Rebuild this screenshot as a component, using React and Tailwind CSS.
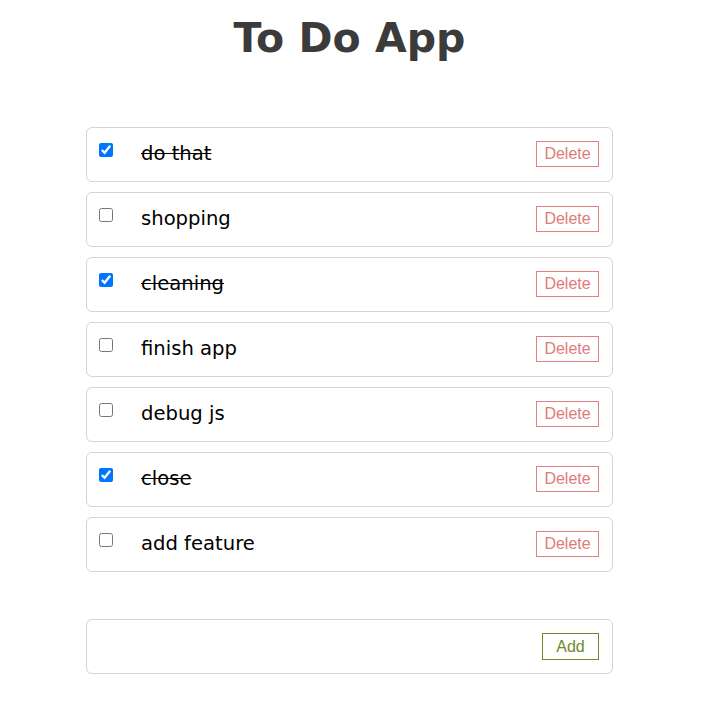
import { useState } from 'react'

const initial = [
  { id: 1, text: 'do that', done: true },
  { id: 2, text: 'shopping', done: false },
  { id: 3, text: 'cleaning', done: true },
  { id: 4, text: 'finish app', done: false },
  { id: 5, text: 'debug js', done: false },
  { id: 6, text: 'close', done: true },
  { id: 7, text: 'add feature', done: false },
]

function TodoItem({ item, onToggle, onDelete }) {
  return (
    <li className="flex items-center h-[55px] border border-[#d4d4d4] rounded-[6px] pl-[12px] pr-[13px]">
      <input
        type="checkbox"
        checked={item.done}
        onChange={() => onToggle(item.id)}
        className="w-[14px] h-[14px] m-0 mb-[9px] accent-[#0075ff] shrink-0"
      />
      <span
        className={`ml-[28px] mb-[2px] flex-1 text-[19.6px] text-black font-['DejaVu_Sans',sans-serif] ${item.done ? 'line-through' : ''}`}
      >
        {item.text}
      </span>
      <button
        onClick={() => onDelete(item.id)}
        className="w-[63px] h-[26px] mb-[1px] border border-[#e08080] text-[#e07b7b] text-[16px] font-['Liberation_Sans',Arial,sans-serif] bg-white"
      >
        Delete
      </button>
    </li>
  )
}

export default function App() {
  const [todos, setTodos] = useState(initial)
  const [text, setText] = useState('')

  const toggle = (id) => setTodos(todos.map((t) => (t.id === id ? { ...t, done: !t.done } : t)))
  const remove = (id) => setTodos(todos.filter((t) => t.id !== id))
  const add = () => {
    if (!text.trim()) return
    setTodos([...todos, { id: Date.now(), text, done: false }])
    setText('')
  }

  return (
    <div className="min-h-[717px] bg-white">
      <div className="ml-[86px] w-[527px]">
        <h1 className="pt-[14px] text-center text-[41px] leading-[48px] font-bold text-[#3b3b3b] font-['DejaVu_Sans',sans-serif]">
          To Do App
        </h1>

        <ul className="mt-[65px] flex flex-col gap-[10px]">
          {todos.map((t) => (
            <TodoItem key={t.id} item={t} onToggle={toggle} onDelete={remove} />
          ))}
        </ul>

        {/* new item */}
        <div className="mt-[47px] flex items-center h-[55px] border border-[#d4d4d4] rounded-[6px] pl-[12px] pr-[13px]">
          <input
            value={text}
            onChange={(e) => setText(e.target.value)}
            className="flex-1 outline-none text-[20px] font-['DejaVu_Sans',sans-serif]"
          />
          <button
            onClick={add}
            className="w-[57px] h-[27px] border border-[#6b8a2a] text-[#6b8a2a] text-[16px] font-['Liberation_Sans',Arial,sans-serif] bg-white"
          >
            Add
          </button>
        </div>
      </div>
    </div>
  )
}
